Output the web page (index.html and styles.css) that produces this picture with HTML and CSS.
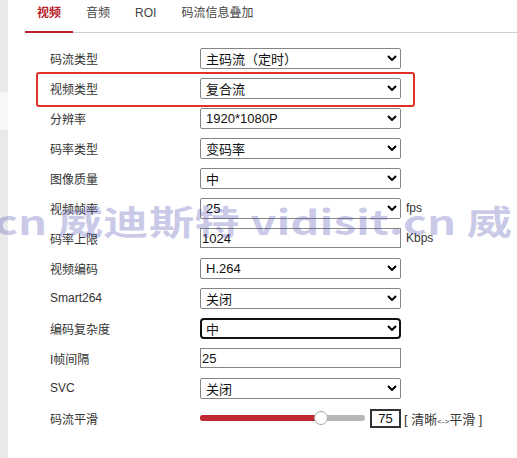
FILE: index.html
```html
<!DOCTYPE html>
<html lang="zh-CN">
<head>
<meta charset="utf-8">
<title>视频参数</title>
<link rel="stylesheet" href="styles.css">
</head>
<body>
<div class="page">
  <aside class="strip">
    <div class="seg seg-a"></div>
    <div class="seg seg-b"></div>
    <div class="seg seg-c"></div>
  </aside>
  <main class="main">
    <nav class="tabs">
      <div class="tab active">视频</div>
      <div class="tab">音频</div>
      <div class="tab">ROI</div>
      <div class="tab">码流信息叠加</div>
    </nav>
    <div class="form">
      <div class="row"><div class="label">码流类型</div><div class="sel"><span>主码流（定时）</span><svg class="chev" viewBox="0 0 10 6"><path d="M1 1 L5 5 L9 1"/></svg></div></div>
      <div class="row hl"><div class="label">视频类型</div><div class="sel"><span>复合流</span><svg class="chev" viewBox="0 0 10 6"><path d="M1 1 L5 5 L9 1"/></svg></div></div>
      <div class="row"><div class="label">分辨率</div><div class="sel"><span>1920*1080P</span><svg class="chev" viewBox="0 0 10 6"><path d="M1 1 L5 5 L9 1"/></svg></div></div>
      <div class="row"><div class="label">码率类型</div><div class="sel"><span>变码率</span><svg class="chev" viewBox="0 0 10 6"><path d="M1 1 L5 5 L9 1"/></svg></div></div>
      <div class="row"><div class="label">图像质量</div><div class="sel"><span>中</span><svg class="chev" viewBox="0 0 10 6"><path d="M1 1 L5 5 L9 1"/></svg></div></div>
      <div class="row"><div class="label">视频帧率</div><div class="sel"><span>25</span><svg class="chev" viewBox="0 0 10 6"><path d="M1 1 L5 5 L9 1"/></svg></div><span class="unit">fps</span></div>
      <div class="row"><div class="label">码率上限</div><div class="inp">1024</div><span class="unit">Kbps</span></div>
      <div class="row"><div class="label">视频编码</div><div class="sel"><span>H.264</span><svg class="chev" viewBox="0 0 10 6"><path d="M1 1 L5 5 L9 1"/></svg></div></div>
      <div class="row"><div class="label">Smart264</div><div class="sel"><span>关闭</span><svg class="chev" viewBox="0 0 10 6"><path d="M1 1 L5 5 L9 1"/></svg></div></div>
      <div class="row"><div class="label">编码复杂度</div><div class="sel focus"><span>中</span><svg class="chev" viewBox="0 0 10 6"><path d="M1 1 L5 5 L9 1"/></svg></div></div>
      <div class="row"><div class="label">I帧间隔</div><div class="inp">25</div></div>
      <div class="row"><div class="label">SVC</div><div class="sel"><span>关闭</span><svg class="chev" viewBox="0 0 10 6"><path d="M1 1 L5 5 L9 1"/></svg></div></div>
      <div class="row"><div class="label">码流平滑</div>
        <div class="slider"><div class="fill" style="width:121px"></div><div class="thumb"></div></div>
        <div class="val">75</div>
        <span class="hint">[ 清晰<small>&lt;-&gt;</small>平滑 ]</span>
      </div>
    </div>
  </main>
  <div class="wm"><span>cn 威迪斯特 vidisit.cn 威</span></div>
</div>
</body>
</html>
```

FILE: styles.css
```css
* { box-sizing: border-box; }
html, body { margin: 0; padding: 0; background: #fff; }
body {
  width: 517px;
  height: 458px;
  overflow: hidden;
  font-family: "Liberation Sans", "Noto Sans CJK SC", Arial, sans-serif;
  color: #333;
}
.page {
  position: relative;
  display: flex;
  height: 458px;
  overflow: hidden;
}
.strip {
  width: 8px;
  flex: none;
  display: flex;
  flex-direction: column;
}
.seg-a { height: 92px; background: #e9e9e9; }
.seg-b { height: 38px; background: #f7f7f7; }
.seg-c { flex: 1; background: #e9e9e9; }

.main {
  flex: 1;
  padding-left: 17px;
}
.tabs {
  display: flex;
  height: 33px;
  border-bottom: 1px solid #cfcfcf;
  align-items: flex-start;
  gap: 1px;
}
.tab {
  height: 33px;
  padding: 5px 12px 0;
  font-size: 12px;
  line-height: 16px;
  color: #444;
  border-bottom: 2px solid transparent;
}
.tab.active {
  color: #b8242b;
  border-bottom-color: #b8242b;
  font-weight: 600;
}

.form {
  margin-top: 10px;
  padding-left: 25px;
}
.row {
  position: relative;
  display: flex;
  align-items: center;
  height: 30px;
}
.row.hl::after {
  content: "";
  position: absolute;
  left: -14px;
  top: -1px;
  width: 375px;
  height: 31px;
  border: 2px solid #e2312b;
  border-radius: 3px;
}
.label {
  width: 150px;
  flex: none;
  font-size: 12px;
  color: #333;
}
.sel {
  width: 201px;
  height: 21px;
  border: 1px solid #858585;
  border-radius: 2px;
  padding: 0 3px 0 5px;
  display: flex;
  align-items: center;
  justify-content: space-between;
  font-size: 13px;
  color: #111;
  background: #fff;
}
.sel.focus {
  border: 2px solid #111;
  border-radius: 4px;
  padding: 0 2px 0 4px;
}
.chev {
  width: 10px;
  height: 6px;
  fill: none;
  stroke: #000;
  stroke-width: 2;
}
.inp {
  width: 201px;
  height: 20px;
  border: 1px solid #858585;
  padding: 0 1px;
  display: flex;
  align-items: center;
  font-size: 13px;
  color: #111;
  background: #fff;
}
.unit {
  margin-left: 5px;
  font-size: 12px;
  color: #333;
}
.slider {
  position: relative;
  width: 165px;
  height: 6px;
  background: #b7b7b7;
  border-radius: 3px;
}
.fill {
  height: 100%;
  background: #c1272e;
  border-radius: 3px;
}
.thumb {
  position: absolute;
  left: 114px;
  top: -4px;
  width: 14px;
  height: 14px;
  border-radius: 50%;
  background: #fff;
  border: 1px solid #a9a9a9;
}
.val {
  margin-left: 5px;
  width: 31px;
  height: 19px;
  border: 2px solid #333;
  font-size: 13px;
  line-height: 15px;
  text-align: center;
  color: #111;
}
.hint {
  margin-left: 3px;
  font-size: 13px;
  color: #333;
}
.hint small { font-size: 8px; }

.wm {
  position: absolute;
  left: -6px;
  top: 204px;
  white-space: nowrap;
  pointer-events: none;
}
.wm span {
  display: inline-block;
  font-family: "Noto Sans CJK SC", "Noto Sans", sans-serif;
  font-weight: 700;
  font-size: 34px;
  line-height: 34px;
  color: rgba(70, 70, 175, 0.28);
  transform: scaleX(1.34);
  transform-origin: left top;
}
```
